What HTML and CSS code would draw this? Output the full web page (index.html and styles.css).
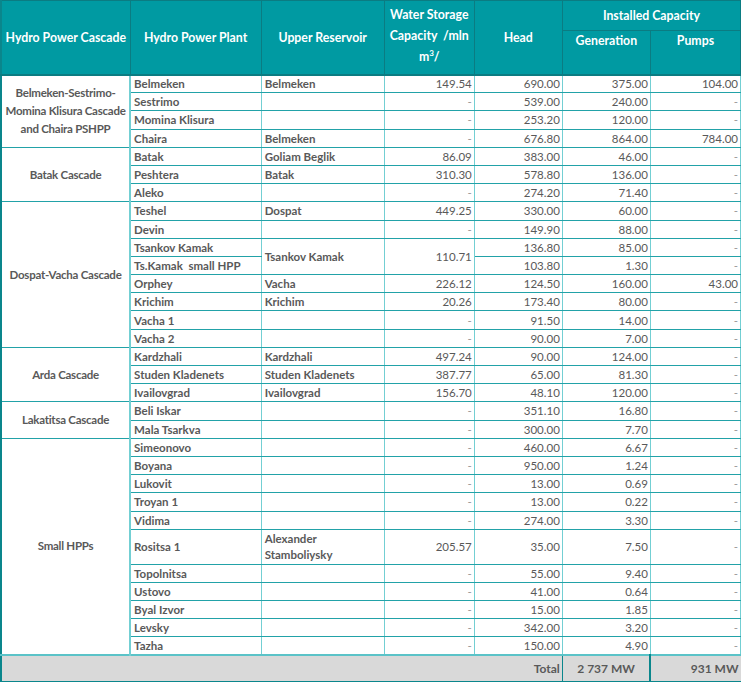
FILE: index.html
```html
<!DOCTYPE html>
<html>
<head>
<meta charset="utf-8">
<link rel="stylesheet" href="styles.css">
</head>
<body>
<table class="hpp">
  <colgroup>
    <col class="c1"><col class="c2"><col class="c3"><col class="c4"><col class="c5"><col class="c6"><col class="c7">
  </colgroup>
  <thead>
    <tr class="h1">
      <th rowspan="2">Hydro Power Cascade</th>
      <th rowspan="2">Hydro Power Plant</th>
      <th rowspan="2">Upper Reservoir</th>
      <th rowspan="2" class="wsc">Water Storage Capacity &nbsp;/mln m<sup>3</sup>/</th>
      <th rowspan="2">Head</th>
      <th colspan="2" class="ic">Installed Capacity</th>
    </tr>
    <tr class="h2">
      <th class="sub">Generation</th>
      <th class="sub">Pumps</th>
    </tr>
  </thead>
  <tbody class="grp">
    <tr><td rowspan="4" class="casc">Belmeken-Sestrimo-Momina Klisura Cascade and Chaira PSHPP</td><td class="nm">Belmeken</td><td class="nm">Belmeken</td><td class="n">149.54</td><td class="n">690.00</td><td class="n">375.00</td><td class="n">104.00</td></tr>
    <tr><td class="nm">Sestrimo</td><td class="nm"></td><td class="n d">-</td><td class="n">539.00</td><td class="n">240.00</td><td class="n d">-</td></tr>
    <tr><td class="nm">Momina Klisura</td><td class="nm"></td><td class="n d">-</td><td class="n">253.20</td><td class="n">120.00</td><td class="n d">-</td></tr>
    <tr><td class="nm">Chaira</td><td class="nm">Belmeken</td><td class="n d">-</td><td class="n">676.80</td><td class="n">864.00</td><td class="n">784.00</td></tr>
  </tbody>
  <tbody class="grp">
    <tr><td rowspan="3" class="casc">Batak Cascade</td><td class="nm">Batak</td><td class="nm">Goliam Beglik</td><td class="n">86.09</td><td class="n">383.00</td><td class="n">46.00</td><td class="n d">-</td></tr>
    <tr><td class="nm">Peshtera</td><td class="nm">Batak</td><td class="n">310.30</td><td class="n">578.80</td><td class="n">136.00</td><td class="n d">-</td></tr>
    <tr><td class="nm">Aleko</td><td class="nm"></td><td class="n d">-</td><td class="n">274.20</td><td class="n">71.40</td><td class="n d">-</td></tr>
  </tbody>
  <tbody class="grp">
    <tr><td rowspan="8" class="casc">Dospat-Vacha Cascade</td><td class="nm">Teshel</td><td class="nm">Dospat</td><td class="n">449.25</td><td class="n">330.00</td><td class="n">60.00</td><td class="n d">-</td></tr>
    <tr><td class="nm">Devin</td><td class="nm"></td><td class="n d">-</td><td class="n">149.90</td><td class="n">88.00</td><td class="n d">-</td></tr>
    <tr><td class="nm">Tsankov Kamak</td><td class="nm" rowspan="2">Tsankov Kamak</td><td class="n" rowspan="2">110.71</td><td class="n">136.80</td><td class="n">85.00</td><td class="n d">-</td></tr>
    <tr><td class="nm">Ts.Kamak &nbsp;small HPP</td><td class="n">103.80</td><td class="n">1.30</td><td class="n d">-</td></tr>
    <tr><td class="nm">Orphey</td><td class="nm">Vacha</td><td class="n">226.12</td><td class="n">124.50</td><td class="n">160.00</td><td class="n">43.00</td></tr>
    <tr><td class="nm">Krichim</td><td class="nm">Krichim</td><td class="n">20.26</td><td class="n">173.40</td><td class="n">80.00</td><td class="n d">-</td></tr>
    <tr><td class="nm">Vacha 1</td><td class="nm"></td><td class="n d">-</td><td class="n">91.50</td><td class="n">14.00</td><td class="n d">-</td></tr>
    <tr><td class="nm">Vacha 2</td><td class="nm"></td><td class="n d">-</td><td class="n">90.00</td><td class="n">7.00</td><td class="n d">-</td></tr>
  </tbody>
  <tbody class="grp">
    <tr><td rowspan="3" class="casc">Arda Cascade</td><td class="nm">Kardzhali</td><td class="nm">Kardzhali</td><td class="n">497.24</td><td class="n">90.00</td><td class="n">124.00</td><td class="n d">-</td></tr>
    <tr><td class="nm">Studen Kladenets</td><td class="nm">Studen Kladenets</td><td class="n">387.77</td><td class="n">65.00</td><td class="n">81.30</td><td class="n d">-</td></tr>
    <tr><td class="nm">Ivailovgrad</td><td class="nm">Ivailovgrad</td><td class="n">156.70</td><td class="n">48.10</td><td class="n">120.00</td><td class="n d">-</td></tr>
  </tbody>
  <tbody class="grp">
    <tr><td rowspan="2" class="casc">Lakatitsa Cascade</td><td class="nm">Beli Iskar</td><td class="nm"></td><td class="n d">-</td><td class="n">351.10</td><td class="n">16.80</td><td class="n d">-</td></tr>
    <tr><td class="nm">Mala Tsarkva</td><td class="nm"></td><td class="n d">-</td><td class="n">300.00</td><td class="n">7.70</td><td class="n d">-</td></tr>
  </tbody>
  <tbody class="grp">
    <tr><td rowspan="11" class="casc">Small HPPs</td><td class="nm">Simeonovo</td><td class="nm"></td><td class="n d">-</td><td class="n">460.00</td><td class="n">6.67</td><td class="n d">-</td></tr>
    <tr><td class="nm">Boyana</td><td class="nm"></td><td class="n d">-</td><td class="n">950.00</td><td class="n">1.24</td><td class="n d">-</td></tr>
    <tr><td class="nm">Lukovit</td><td class="nm"></td><td class="n d">-</td><td class="n">13.00</td><td class="n">0.69</td><td class="n d">-</td></tr>
    <tr><td class="nm">Troyan 1</td><td class="nm"></td><td class="n d">-</td><td class="n">13.00</td><td class="n">0.22</td><td class="n d">-</td></tr>
    <tr><td class="nm">Vidima</td><td class="nm"></td><td class="n d">-</td><td class="n">274.00</td><td class="n">3.30</td><td class="n d">-</td></tr>
    <tr class="tall"><td class="nm">Rositsa 1</td><td class="nm">Alexander Stamboliysky</td><td class="n">205.57</td><td class="n">35.00</td><td class="n">7.50</td><td class="n d">-</td></tr>
    <tr><td class="nm">Topolnitsa</td><td class="nm"></td><td class="n d">-</td><td class="n">55.00</td><td class="n">9.40</td><td class="n d">-</td></tr>
    <tr><td class="nm">Ustovo</td><td class="nm"></td><td class="n d">-</td><td class="n">41.00</td><td class="n">0.64</td><td class="n d">-</td></tr>
    <tr><td class="nm">Byal Izvor</td><td class="nm"></td><td class="n d">-</td><td class="n">15.00</td><td class="n">1.85</td><td class="n d">-</td></tr>
    <tr><td class="nm">Levsky</td><td class="nm"></td><td class="n d">-</td><td class="n">342.00</td><td class="n">3.20</td><td class="n d">-</td></tr>
    <tr><td class="nm">Tazha</td><td class="nm"></td><td class="n d">-</td><td class="n">150.00</td><td class="n">4.90</td><td class="n d">-</td></tr>
  </tbody>
  <tfoot>
    <tr>
      <td colspan="4" class="tblank"></td>
      <td class="tlabel">Total</td>
      <td class="tgen">2 737 MW</td>
      <td class="tpump">931 MW</td>
    </tr>
  </tfoot>
</table>
</body>
</html>
```

FILE: styles.css
```css
html, body {
  margin: 0;
  padding: 0;
  background: #ffffff;
}

.hpp {
  width: 741px;
  table-layout: fixed;
  border-collapse: collapse;
  font-family: Lato, "Open Sans", sans-serif;
  font-size: 11.5px;
  color: #595959;
  border-left: 2px solid #0a868c;
}

.c1 { width: 129px; }
.c2 { width: 131px; }
.c3 { width: 123px; }
.c4 { width: 90px; }
.c5 { width: 88px; }
.c6 { width: 88px; }
.c7 { width: 90px; }

thead th {
  background: #009aa2;
  color: #ffffff;
  font-weight: bold;
  font-size: 12.3px;
  border: 1px solid #0b7c82;
  padding: 0 2px;
  text-align: center;
  vertical-align: middle;
}

.h1 { height: 30px; }
.h2 { height: 44px; }

thead tr:last-child th,
thead .h1 th[rowspan] {
  border-bottom: 2px solid #0b7c82;
}

.wsc {
  line-height: 21px;
  vertical-align: top;
  padding-top: 3px;
}

.wsc sup {
  font-size: 8px;
  line-height: 1;
  vertical-align: super;
}

.sub {
  vertical-align: top;
  padding-top: 2px;
}

tbody tr {
  height: 18.2px;
}

tbody tr.tall {
  height: 35px;
}

tbody td {
  border: 1px solid #22a2a8;
  border-left-color: #73cfd3;
  border-right-color: #73cfd3;
  padding: 0 2px 0 3px;
  white-space: nowrap;
  overflow: hidden;
  line-height: 15px;
  height: 16px;
}

.grp {
  border-top: 1px solid #0b868c;
}

td.casc {
  text-align: center;
  font-weight: bold;
  white-space: normal;
  line-height: 18px;
  padding: 0;
  letter-spacing: -0.25px;
  border-left: none;
  border-right: 2px solid #73cfd3;
}

td.nm {
  font-weight: bold;
  text-align: left;
}

.tall td.nm {
  white-space: normal;
  line-height: 16px;
}

td.n {
  text-align: right;
}

td.d {
  color: #9a9a9a;
}

tfoot tr {
  height: 27px;
  background: #d9d9d9;
}

tfoot td {
  border-top: 2px solid #5bc3c8;
  border-bottom: 2px solid #0a868c;
  font-weight: bold;
  font-size: 12px;
  color: #595959;
}

.tblank {
  border-right: none;
}

.tlabel {
  text-align: right;
  padding-right: 2px;
  border-right: 1px solid #0a868c;
}

.tgen {
  text-align: center;
  border-right: 2px solid #0a868c;
}

.tpump {
  text-align: right;
  padding-right: 2px;
}
```
